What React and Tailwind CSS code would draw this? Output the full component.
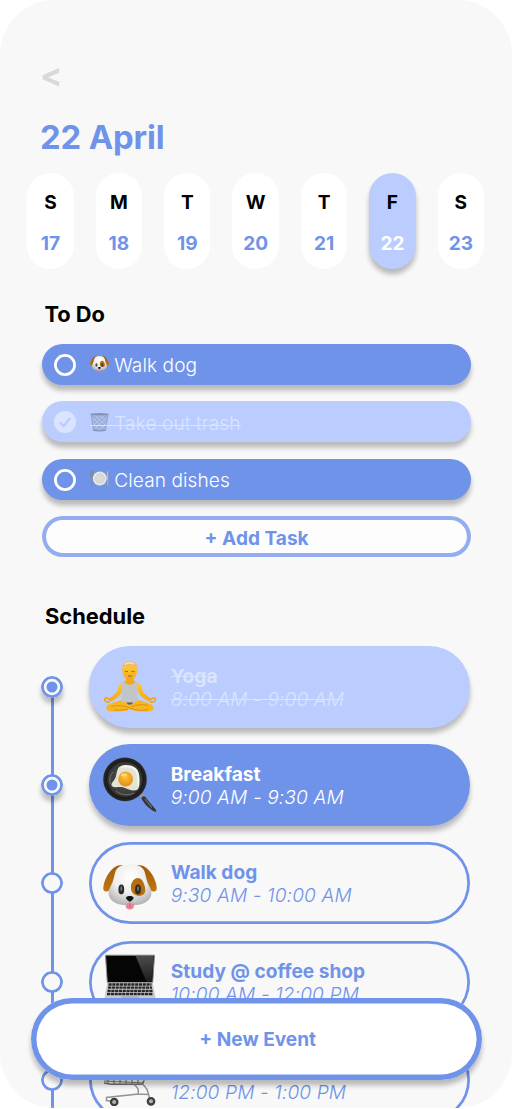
const DAYS = [
  ["S", 17], ["M", 18], ["T", 19], ["W", 20], ["T", 21], ["F", 22], ["S", 23],
];

function Dog({ className }) {
  return (
    <svg viewBox="0 0 54 46" className={className} aria-hidden="true">
      <defs>
        <radialGradient id="dogFace" cx="50%" cy="32%" r="70%">
          <stop offset="0" stopColor="#ffffff" />
          <stop offset=".55" stopColor="#eeeeee" />
          <stop offset="1" stopColor="#b4b4b4" />
        </radialGradient>
        <linearGradient id="dogEar" x1="0" y1="0" x2="0" y2="1">
          <stop offset="0" stopColor="#a05c08" />
          <stop offset="1" stopColor="#c27611" />
        </linearGradient>
      </defs>
      <path d="M20 1.500C13-.5 7 6 3.500 13 1 18 .2 22 .3 25c.2 3 4 3.500 7 .5L16 14z" fill="url(#dogEar)" />
      <path d="M34 1.500C41-.5 47 6 50.500 13c2.500 5 3.300 9 3.200 12-.2 3-4 3.500-7 .5L38 14z" fill="url(#dogEar)" />
      <path d="M27 .3C19 .3 13.500 3 12 9c-1.200 5-2 9-4.200 13C5.500 26 5 29 6 32c2 6 8.500 8.500 14.500 9h13c6-.5 12.500-3 14.500-9 1-3 .5-6-1.800-10C44 18 43.200 14 42 9 40.500 3 35 .3 27 .3z" fill="url(#dogFace)" />
      <path d="M35 14c-5 0-7.700 6-7 11 .7 5 5 7.300 9.500 6.700C42 31 43 27 41.800 22.500 40.600 18 38.500 14 35 14z" fill="#b56d0e" />
      <path d="M22.700 39h8.300v3c0 4.800-8.300 4.800-8.300 0z" fill="#ee8298" />
      <path d="M26.900 39v5" stroke="#cc6078" strokeWidth="1" />
      <path d="M19 39.500c3 1.200 6 .3 7.800-1.700 1.800 2 4.800 2.900 7.800 1.700" fill="none" stroke="#b5b5b5" strokeWidth="1.200" />
      <ellipse cx="18.300" cy="25.500" rx="2.900" ry="4.900" fill="#2b2b2b" />
      <ellipse cx="35" cy="25.500" rx="2.900" ry="4.900" fill="#2b2b2b" />
      <ellipse cx="18.300" cy="24.500" rx="1" ry="2.500" fill="#737373" />
      <ellipse cx="35" cy="24.500" rx="1" ry="2.500" fill="#737373" />
      <path d="M23.200 33c1.500-1.500 5.800-1.500 7.200 0 .8 2-2.300 4.500-3.600 4.500S22.400 35 23.200 33z" fill="#141414" />
    </svg>
  );
}

function Trash({ className }) {
  return (
    <svg viewBox="0 0 20 20" className={className} aria-hidden="true">
      <path d="M1 2h18l-2.600 16.500q-6.400 2-12.800 0z" fill="#9badd9" />
      <path d="M2 5l14 13M5 3l12 11M10 3l8 7M2.500 10l8 9M18 5L4 18M15 3L3 14M10 3L2 10M17.500 10l-8 9" stroke="#c3cff0" strokeWidth=".7" />
      <path d="M1 2h18l-2.600 16.500q-6.400 2-12.800 0z" fill="none" stroke="#8f9fc6" strokeWidth=".8" />
      <ellipse cx="10" cy="1.800" rx="9.500" ry="1.200" fill="#8090b6" />
      <path d="M3.500 18.500q6.500 1.500 13 0" fill="none" stroke="#8393b9" strokeWidth="1.200" />
    </svg>
  );
}

function Plate({ className }) {
  return (
    <svg viewBox="0 0 20 20" className={className} aria-hidden="true">
      <path d="M.7 1v5q0 1.500 1.300 1.500Q3.300 7.500 3.300 6V1M2 1.500V18" fill="none" stroke="#808a9c" strokeWidth="1.200" />
      <path d="M17.500 2q2-2 2 1.500V18h-1.400v-7h-.6z" fill="#b9c0cb" stroke="#7b8598" strokeWidth=".5" />
      <circle cx="10.300" cy="9.500" r="7.300" fill="#e8e8e8" />
      <circle cx="10.300" cy="9.500" r="4.900" fill="#dadada" stroke="#c2c2c2" strokeWidth=".6" />
    </svg>
  );
}

function Yoga({ className }) {
  return (
    <svg viewBox="0 0 53 51" className={className} aria-hidden="true">
      <defs>
        <linearGradient id="skin" x1="0" y1="0" x2="0" y2="1">
          <stop offset="0" stopColor="#ffcb2e" />
          <stop offset="1" stopColor="#f2a814" />
        </linearGradient>
      </defs>
      <path d="M19.500 21c-3.500.8-4.500 4-5.500 8-.8 2.800-4 6-8.500 8.300l1.500 3C13 38 17 34.500 18.500 30.500l3-5zM33.500 21c3.500.8 4.500 4 5.500 8 .8 2.800 4 6 8.500 8.300l-1.500 3C40 38 36 34.500 34.500 30.500l-3-5z" fill="url(#skin)" />
      <path d="M18.500 39C13 40 8 42 4.500 44c-3 2-2 6 2.500 6.300 6 .4 12 .2 16-.8l3.500-1 3.500 1c4 1 10 1.200 16 .8 4.500-.3 5.500-4.300 2.500-6.300-3.500-2-8.500-4-14-5z" fill="#f9b51c" />
      <path d="M8 45.500c6-1.500 13-.8 18.500 1.500 6 2.500 12 3 18 1.500M45 44.500c-6-1.500-12-1-17 1.200M24.500 48c-4 1.300-9 1.500-14 .8" fill="none" stroke="#d08a12" strokeWidth=".8" />
      <path d="M22.500 14h7.500v5.500l3 1.800-6.700 4-6.800-4 3-1.800z" fill="#f0a91b" />
      <path d="M20.500 20.300c-2.500 1-2.800 4-2 8.200V41q7.700 1.500 15.500 0V28.500c.8-4.200.5-7.200-2-8.200-.8 4.500-10.500 4.500-11.500 0z" fill="#c3c4c8" />
      <path d="M23 41.500h6.500l-1.500 2h-3.500z" fill="#4d608b" />
      <path d="M18.700 8c0 7 3.300 10.500 7.500 10.500S33.700 15 33.700 8q-7.500-5-15 0z" fill="url(#skin)" />
      <path d="M18.600 10.500C17.500 4 21 .2 26.500.2S35 4 33.800 10.500C33 9 33 8 32.500 6.500c-4 .8-9 .2-11.500-1C19.500 7 19.500 9 18.600 10.500z" fill="#f0bd62" />
      <path d="M21.500 3.500q4.500-3.300 9-.3" stroke="#ffe4a4" strokeWidth="1.500" fill="none" />
      <path d="M21.500 10.300q1.500 1 3 0M28 10.300q1.500 1 3 0M24.500 14.800q1.800 1 3.600 0" stroke="#94590a" strokeWidth=".9" fill="none" />
      <path d="M6.500 39.500C5 36.500.8 36.500 1 38.500c.3 2 3 2.800 5.500 2.500M46.500 39.500c1.500-3 5.700-3 5.500-1-.3 2-3 2.800-5.500 2.500" stroke="#eda61b" strokeWidth="1.600" fill="none" />
    </svg>
  );
}

function Pan({ className }) {
  return (
    <svg viewBox="0 0 54 55" className={className} aria-hidden="true">
      <defs>
        <radialGradient id="yolk" cx="48%" cy="35%" r="65%">
          <stop offset="0" stopColor="#ffc53c" />
          <stop offset="1" stopColor="#e58a10" />
        </radialGradient>
        <radialGradient id="iron" cx="50%" cy="50%" r="50%">
          <stop offset="0" stopColor="#5a5856" />
          <stop offset=".75" stopColor="#3a3938" />
          <stop offset=".85" stopColor="#1a1a1a" />
          <stop offset="1" stopColor="#2c2c2c" />
        </radialGradient>
      </defs>
      <path d="M35.500 38l3-2.500 3.500 5-2 2z" fill="#9a9a9a" />
      <path d="M38.500 41.500c.2-2 2.500-3 4-1.200l10 12c1.300 1.800.8 3-1 2.200C46 52 41 46.500 38.500 41.500z" fill="#343434" />
      <path d="M42 42l7 8.500" stroke="#686868" strokeWidth="1.200" />
      <circle cx="22" cy="22.400" r="21.800" fill="url(#iron)" />
      <path d="M10 15c-3 3-4 8-2.500 12M13 34c5 4 12 5 18 2" fill="none" stroke="#74706b" strokeWidth="1" />
      <path d="M17 9.500c5-2.500 11-1.500 14.500.8 4 2.700 5 7.200 5 11.700 0 5 .3 10.500-3.700 11.300-4 .7-8-1.200-12-2.800-4-1.300-9.500 1-12-1.500-1.500-2.500 2.500-5 4-9 1-3 1-9 4.200-10.500z" fill="#e2e5d6" />
      <path d="M18 10.500c5-2 11-1 14.500 2 3.500 3 3 10 2.700 16" fill="none" stroke="#f7f8ec" strokeWidth="1.800" />
      <circle cx="22.600" cy="22" r="7.400" fill="url(#yolk)" />
      <ellipse cx="21" cy="18" rx="3" ry="1.500" fill="#ffdc7b" />
    </svg>
  );
}

function Laptop({ className }) {
  return (
    <svg viewBox="0 0 54 50" className={className} aria-hidden="true">
      <defs>
        <linearGradient id="glare" x1="0" y1="0" x2="0" y2="1">
          <stop offset="0" stopColor="#4c4c4c" />
          <stop offset="1" stopColor="#1c1c1c" />
        </linearGradient>
      </defs>
      <path d="M2.500 1.200h49l-1.800 27.300H4.300z" fill="#050505" stroke="#8d8d8d" strokeWidth="1" />
      <path d="M32.500 2h18L49 27.800h-5.500z" fill="url(#glare)" />
      <path d="M4.300 28.800h45.400L52.500 44v4h-51v-4z" fill="#c9c9cb" />
      <path d="M5.500 30.500h43M5 33.600h44M4.500 36.800h45M4 40h46" stroke="#262626" strokeWidth="2.300" strokeDasharray="3.200 .6" />
      <path d="M18.500 42h17l1 4h-19z" fill="#b2b2b4" />
    </svg>
  );
}

function Cart({ className }) {
  return (
    <svg viewBox="0 0 54 52" className={className} aria-hidden="true" fill="none">
      <path d="M1 3h40v24M5 26v4M11 26v4M17 26v4M23 26v4M29 26v4M35 26v4M1 27l40 2" stroke="#7c7e81" strokeWidth="1.200" />
      <path d="M1 29l7 1.200h31l2-3" stroke="#6f7174" strokeWidth="1.400" />
      <path d="M39.500 30c2 2 5 4.500 5.500 8.500l2 7M31 30.500c3 2 5.500 5 4 9.500L3.500 43.500v3l6 1M35 40l10.500.5" stroke="#929497" strokeWidth="1.500" />
      <circle cx="11.200" cy="48" r="3.200" fill="#b5b3b2" stroke="#433d3b" strokeWidth="2.300" />
      <circle cx="48" cy="47.300" r="3.200" fill="#b5b3b2" stroke="#433d3b" strokeWidth="2.300" />
    </svg>
  );
}

const TASKS = [
  { label: "Walk dog", Icon: Dog },
  { label: "Take out trash", Icon: Trash, done: true },
  { label: "Clean dishes", Icon: Plate },
];

const EVENTS = [
  { title: "Yoga", time: "8:00 AM - 9:00 AM", Icon: Yoga, state: "done", icon: "mt-[15px] w-[54px] h-[51px]" },
  { title: "Breakfast", time: "9:00 AM - 9:30 AM", Icon: Pan, state: "active", icon: "mt-[13px] w-[54px] h-[55px]" },
  { title: "Walk dog", time: "9:30 AM - 10:00 AM", Icon: Dog, state: "next", icon: "mt-[22px] w-[54px] h-[46px]" },
  { title: "Study @ coffee shop", time: "10:00 AM - 12:00 PM", Icon: Laptop, state: "next", icon: "mt-[13px] w-[54px] h-[50px]" },
  { title: "Groceries", time: "12:00 PM - 1:00 PM", Icon: Cart, state: "next", icon: "mt-[15px] w-[54px] h-[52px]" },
];

const CARD = {
  done: "bg-[#bbccff] text-[#dae4ff] line-through shadow-[0_5.460px_5.460px_rgba(0,0,0,0.25)]",
  active: "bg-[#7093ea] text-white shadow-[0_5.460px_5.460px_rgba(0,0,0,0.25)]",
  next: "text-[#7093ea] shadow-[inset_0_0_0_2.730px_#7093ea]",
};

function Check({ done }) {
  return (
    <svg viewBox="0 0 22 22" className="mt-[1px] h-[22px] w-[22px] shrink-0" aria-hidden="true">
      {done ? (
        <>
          <circle cx="11" cy="11" r="11" fill="#dae4ff" />
          <path d="M6 11.500l3.600 3.700L16.200 7" fill="none" stroke="#bbccff" strokeWidth="2.500" />
        </>
      ) : (
        <circle cx="11" cy="11" r="9.600" fill="none" stroke="#fff" strokeWidth="2.700" />
      )}
    </svg>
  );
}

function Node({ state }) {
  const next = state === "next";
  return (
    <svg
      viewBox="0 0 22 22"
      className={"relative h-[22px] w-[22px] rounded-full " + (next ? "" : "shadow-[0_5.460px_5.460px_rgba(0,0,0,0.25)]")}
      aria-hidden="true"
    >
      <circle cx="11" cy="11" r="9.600" fill="#f8f8f8" stroke="#7093ea" strokeWidth="2.700" />
      {!next && <circle cx="11" cy="11" r="5.500" fill="#7093ea" />}
    </svg>
  );
}

export default function App() {
  return (
    <div className="h-[1109px] w-[512px] bg-white font-['Inter',sans-serif]">
      <main className="relative h-[1108px] w-full overflow-hidden rounded-[54.600px] bg-[#f8f8f8]">
        <header className="pl-[40px] pt-[55px]">
          <button className="block h-[40px] text-[32.800px] leading-[40px] font-bold text-[#d9d9d9]">&lt;</button>
          <h1 className="mt-[22px] h-[40px] text-[32.800px] leading-[40px] font-bold tracking-[-0.15px] text-[#7093ea]">22 April</h1>
        </header>

        <div className="mt-[16.400px] flex gap-[22px] pl-[27.300px]">
          {DAYS.map(([d, n]) => (
            <div
              key={n}
              className={
                "flex h-[95.600px] w-[46.400px] shrink-0 flex-col items-center rounded-full pt-[18px] text-[19.100px] leading-[23px] " +
                (n === 22 ? "bg-[#bbccff] text-white shadow-[0_5.460px_5.460px_rgba(0,0,0,0.25)]" : "bg-white text-[#7093ea]")
              }
            >
              <span className="font-bold text-black">{d}</span>
              <span className="mt-[18px] font-bold">{n}</span>
            </div>
          ))}
        </div>

        <h2 className="mt-[32px] pl-[44.500px] text-[21.850px] leading-[27px] font-bold tracking-[-0.05px] text-black">To Do</h2>
        <div className="mt-[16px] flex flex-col gap-[16.350px] pl-[42.300px]">
          {TASKS.map(({ label, Icon, done }) => (
            <div
              key={label}
              className={
                "flex h-[41px] w-[428.700px] items-center rounded-full pl-[12px] shadow-[0_5.460px_5.460px_rgba(0,0,0,0.25)] " +
                (done ? "bg-[#bbccff] text-[#dae4ff]" : "bg-[#7093ea] text-white")
              }
            >
              <Check done={done} />
              <span
                className={
                  "relative ml-[14px] mt-[3px] flex items-center text-[19.100px] leading-[23px] font-[350] tracking-[0.08px] " +
                  (done ? "after:absolute after:top-[13px] after:left-0 after:h-[1.500px] after:w-full after:bg-[#dae4ff]" : "")
                }
              >
                <Icon className="mr-[5px] mb-[3px] h-[20px] w-[19px]" />
                {label}
              </span>
            </div>
          ))}
          <button className="h-[41px] w-[428.700px] rounded-full bg-[#fdfdfd] pt-[3px] text-[19.100px] leading-[23px] font-bold text-[#7093ea] shadow-[inset_0_0_0_4.100px_#93adf0]">
            + Add Task
          </button>
        </div>

        <h2 className="mt-[46px] pl-[45px] text-[21.850px] leading-[27px] font-bold text-black">Schedule</h2>
        <div className="relative mt-[15.800px] flex flex-col gap-[16.400px]">
          <div className="absolute top-[41px] left-[50.500px] h-[440px] w-[3px] bg-[#7093ea]" />
          {EVENTS.map(({ title, time, Icon, state, icon }) => (
            <div key={title} className="flex h-[81.900px] items-center pl-[41px]">
              <Node state={state} />
              <div className={"ml-[25.700px] flex h-[81.900px] w-[381px] rounded-full pl-[14px] " + CARD[state]}>
                <div className="w-[68px] shrink-0">
                  <Icon className={icon} />
                </div>
                <div className="pt-[19px] text-[19.100px] leading-[23px]">
                  <p className="font-bold tracking-[0.02px]">{title}</p>
                  <p className="font-light tracking-[0.13px] italic">{time}</p>
                </div>
              </div>
            </div>
          ))}
        </div>

        <button className="absolute top-[998px] left-[31.400px] h-[82px] w-[450.600px] rounded-full bg-white pl-[2px] text-[19.100px] font-bold text-[#7093ea] shadow-[inset_0_0_0_5.460px_#7093ea,0_5.460px_5.460px_rgba(0,0,0,0.25)]">
          + New Event
        </button>
      </main>
    </div>
  );
}
